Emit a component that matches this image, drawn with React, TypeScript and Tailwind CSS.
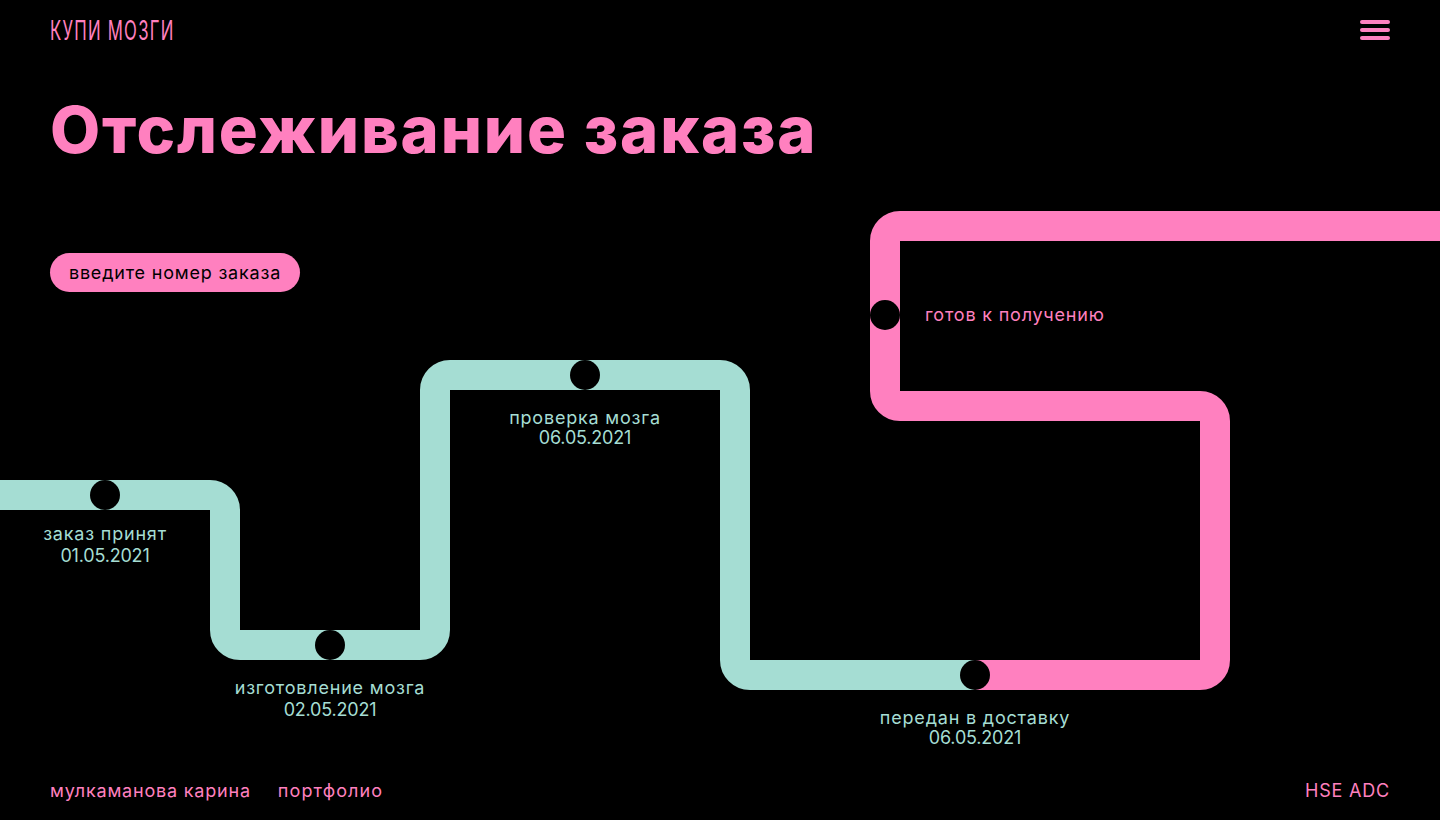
const pink = "#ff80bf"
const teal = "#a5ddd3"

const stops = [
  { cx: 105, cy: 495 },
  { cx: 330, cy: 645 },
  { cx: 585, cy: 375 },
  { cx: 975, cy: 675 },
  { cx: 885, cy: 315 },
]

const labels = [
  { text: "заказ принят", date: "01.05.2021", className: "left-[5px] top-[523px] w-[200px] leading-[22px]" },
  { text: "изготовление мозга", date: "02.05.2021", className: "left-[180px] top-[677px] w-[300px] leading-[22px]" },
  { text: "проверка мозга", date: "06.05.2021", className: "left-[435px] top-[408px] w-[300px] leading-[20px]" },
  { text: "передан в доставку", date: "06.05.2021", className: "left-[825px] top-[708px] w-[300px] leading-[20px]" },
]

function Route() {
  return (
    <svg className="absolute inset-0" width="1440" height="820" viewBox="0 0 1440 820" fill="none">
      <path
        d="M0 495H210A15 15 0 0 1 225 510V630A15 15 0 0 0 240 645H420A15 15 0 0 0 435 630V390A15 15 0 0 1 450 375H720A15 15 0 0 1 735 390V660A15 15 0 0 0 750 675H975"
        stroke={teal}
        strokeWidth="30"
      />
      <path
        d="M975 675H1200A15 15 0 0 0 1215 660V421A15 15 0 0 0 1200 406H900A15 15 0 0 1 885 391V241A15 15 0 0 1 900 226H1440"
        stroke={pink}
        strokeWidth="30"
      />
      {stops.map((s) => (
        <circle key={s.cx} cx={s.cx} cy={s.cy} r="15" fill="#000" />
      ))}
    </svg>
  )
}

export default function App() {
  return (
    <main className="relative flex h-[820px] w-full flex-col overflow-hidden bg-black px-[50px] font-['Inter',sans-serif] text-[#ff80bf]">
      <Route />

      <header className="relative flex h-[60px] items-center justify-between">
        <span className="origin-left scale-x-[0.62] text-[27px] leading-none font-normal tracking-[2px] whitespace-nowrap">
          КУПИ МОЗГИ
        </span>
        <button className="flex w-[30px] flex-col gap-1" aria-label="меню">
          <span className="h-1 rounded-full bg-[#ff80bf]" />
          <span className="h-1 rounded-full bg-[#ff80bf]" />
          <span className="h-1 rounded-full bg-[#ff80bf]" />
        </button>
      </header>

      <h1 className="relative mt-[31px] text-[65px] leading-[78px] font-extrabold tracking-[1.83px] whitespace-nowrap">
        Отслеживание заказа
      </h1>

      <div className="relative mt-[84px]">
        <button className="h-[39px] w-[250px] rounded-[20px] bg-[#ff80bf] text-[18px] tracking-[0.8px] text-black">
          введите номер заказа
        </button>
      </div>

      <p className="absolute top-[305px] left-[925px] text-[18px] leading-5 tracking-[0.8px] whitespace-nowrap">
        готов к получению
      </p>

      {labels.map((l) => (
        <p key={l.text} className={`absolute text-center text-[18px] tracking-[0.8px] text-[#a5ddd3] ${l.className}`}>
          {l.text}
          <br />
          <span className="tracking-[-0.2px]">{l.date}</span>
        </p>
      ))}

      <footer className="relative mt-auto flex h-[43px] items-start justify-between pt-[2px] text-[18px] leading-[24px] tracking-[0.8px]">
        <div className="flex gap-[27px]">
          <span>мулкаманова карина</span>
          <span className="tracking-[1.1px]">портфолио</span>
        </div>
        <span>HSE ADC</span>
      </footer>
    </main>
  )
}
